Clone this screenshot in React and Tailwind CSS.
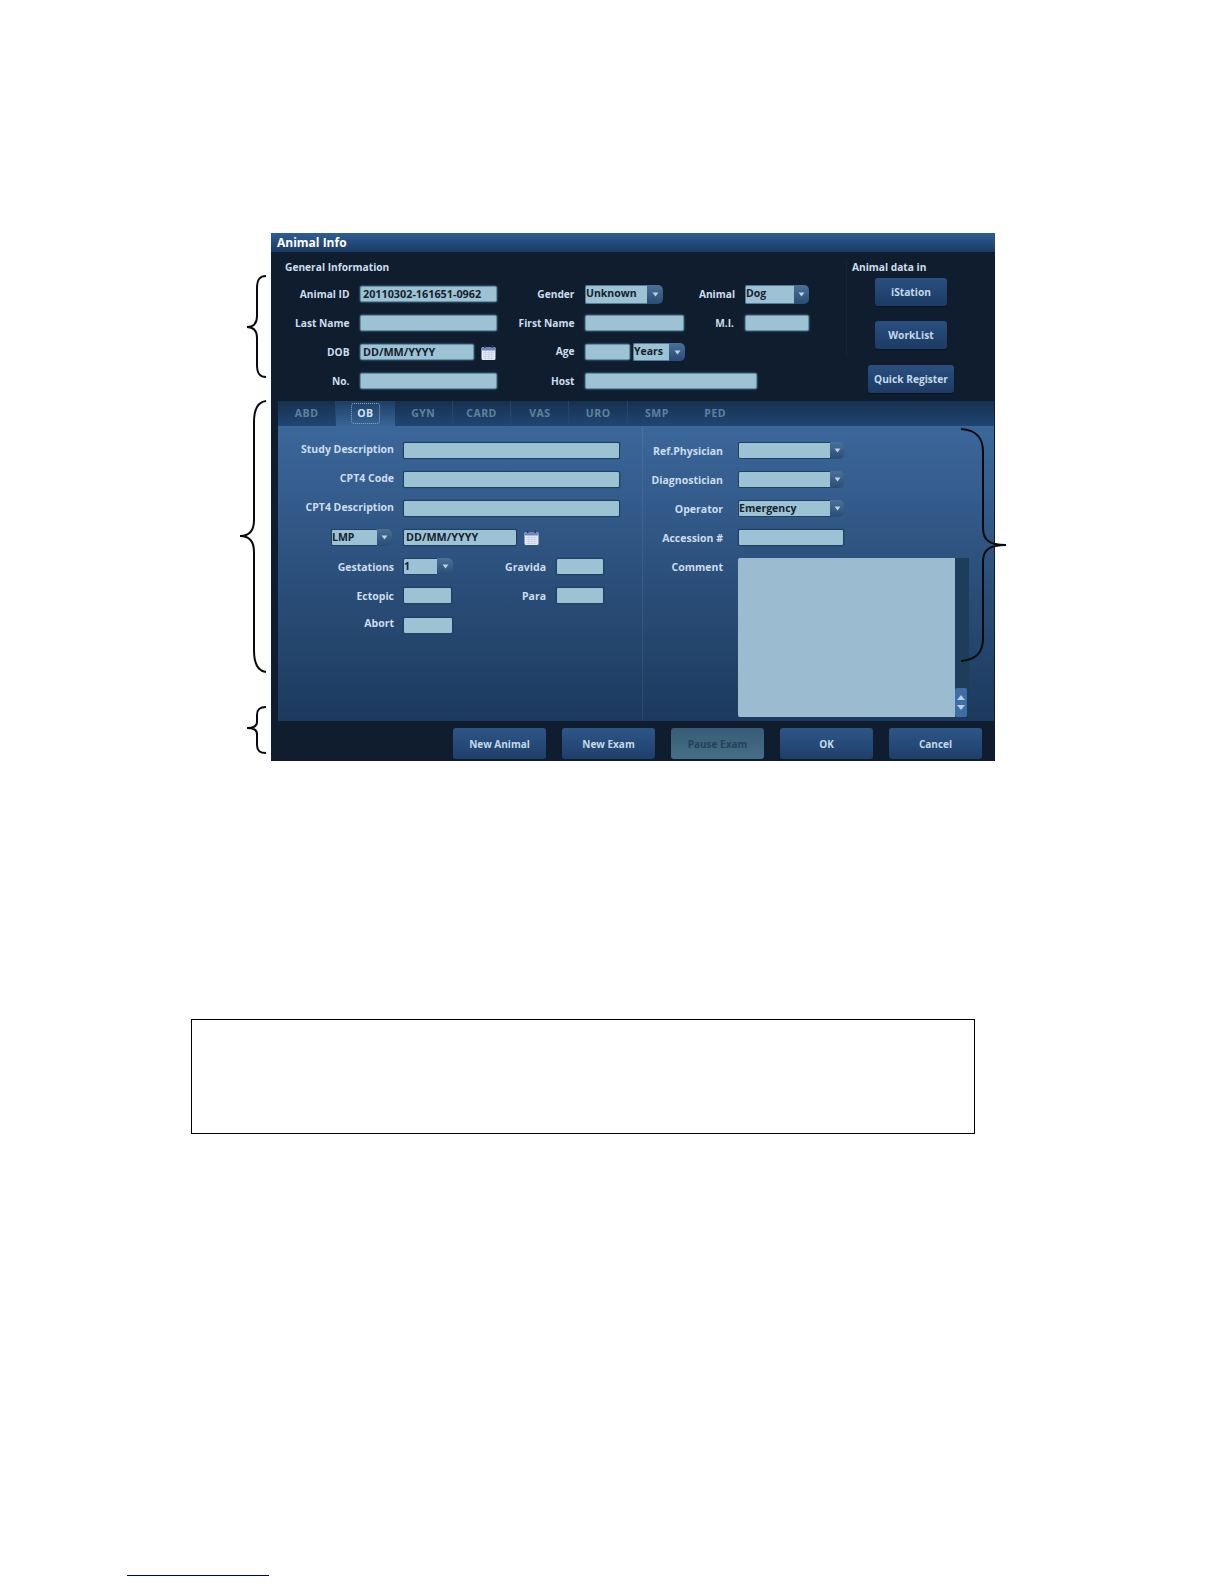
// Animal Info dialog on a manual page, with the page's annotation braces
const FONT = "font-['Open_Sans','Noto_Sans',sans-serif]";

function Label({ className = '', size = 'text-[10.5px]', children }) {
  return (
    <div className={`shrink-0 text-right leading-[14px] font-bold whitespace-nowrap text-[#cddded] ${size} ${className}`}>
      {children}
    </div>
  );
}

// labels of the dark General Information block run slightly smaller
function GenLabel({ className = '', children }) {
  return <Label size="text-[10.2px]" className={className}>{children}</Label>;
}

function Input({ className = '', dark, value }) {
  return (
    <div
      className={`shrink-0 flex items-center rounded-[2px] bg-[#9cc2d3] px-[2px] text-[10.8px] font-bold whitespace-nowrap text-[#16222f] border ${
        dark ? 'border-[#5f93ad] shadow-[0_0_2px_#6fa3bd]' : 'border-[#1d4163] shadow-[0_0_1px_#16304c]'
      } ${className}`}
    >
      {value}
    </div>
  );
}

function Select({ className = '', boxWidth, dark, value }) {
  return (
    <div className={`shrink-0 flex rounded-[3px] ${className}`}>
      <div
        className={`flex-1 flex items-center rounded-l-[2px] bg-[#9cc2d3] text-[10.5px] font-bold whitespace-nowrap text-[#16222f] border-y border-l ${
          dark ? 'border-[#4f7f9a]' : 'border-[#1d4163]'
        }`}
      >
        {value}
      </div>
      <div className={`${boxWidth} flex items-center justify-center rounded-r-[5px] bg-linear-to-b from-[#4b7199] to-[#2a4c75]`}>
        <svg width="7" height="5" viewBox="0 0 7 5">
          <path d="M0.5 0.5 H6.5 L3.5 4.5 Z" fill="#b9d3e4" />
        </svg>
      </div>
    </div>
  );
}

function CalendarIcon({ className = '' }) {
  return (
    <svg className={`shrink-0 ${className}`} width="15" height="15" viewBox="0 0 15 15">
      <rect x="0.5" y="2" width="14" height="13" rx="1.5" fill="#e6e9f6" />
      <rect x="0.5" y="2" width="14" height="3.5" rx="1.5" fill="#6f86bb" />
      <rect x="3" y="0.5" width="1.5" height="2.5" fill="#2c3d5c" />
      <rect x="10.5" y="0.5" width="1.5" height="2.5" fill="#2c3d5c" />
      <path d="M2 7.5 H13 M2 9.5 H13 M2 11.5 H13 M2 13.5 H13 M4.5 6 V14.5 M7.5 6 V14.5 M10.5 6 V14.5" stroke="#c2cbe2" strokeWidth="0.6" />
    </svg>
  );
}

function SideButton({ className = '', children }) {
  return (
    <div className={`pt-[2px] flex items-center justify-center rounded-[3px] bg-linear-to-b from-[#2a4f80] to-[#1c3b65] text-[10.2px] font-bold whitespace-nowrap text-[#c6d9e8] shadow-[0_1px_1px_#0a1420] ${className}`}>
      {children}
    </div>
  );
}

function FootButton({ children, disabled }) {
  return (
    <div
      className={`w-[93px] h-[31px] pt-[2px] flex items-center justify-center rounded-[3px] text-[10px] font-bold whitespace-nowrap ${
        disabled
          ? 'bg-linear-to-b from-[#375c78] to-[#466f85] text-[#254159]'
          : 'bg-linear-to-b from-[#2d5688] to-[#1f3f6c] text-[#c6d9e8]'
      }`}
    >
      {children}
    </div>
  );
}

const TABS = ['ABD', 'OB', 'GYN', 'CARD', 'VAS', 'URO', 'SMP', 'PED'];

function Tabs() {
  return (
    <div className="ml-[7px] mr-[1px] h-[25px] flex bg-linear-to-b from-[#17304f] to-[#214673]">
      {TABS.map((tab, i) => (
        <div
          key={tab}
          className={`w-[58.3px] h-[25px] flex items-center justify-center text-[10.5px] font-bold tracking-[0.5px] ${
            tab === 'OB'
              ? 'bg-linear-to-b from-[#1d3f66] to-[#3a6598] text-[#d3e2ee]'
              : 'text-[#5f82a3]'
          } ${i < 6 && tab !== 'OB' ? 'border-r border-[#24456c]' : ''}`}
        >
          {tab === 'OB' ? (
            <span className="w-[29px] h-[21px] flex items-center justify-center rounded-[3px] border border-dotted border-[#8fa9c0]">
              OB
            </span>
          ) : (
            tab
          )}
        </div>
      ))}
    </div>
  );
}

function GeneralInfo() {
  return (
    <div className="h-[149px] flex">
      <div className="w-[575px] shrink-0 pt-[8px]">
        <div className="ml-[14px] h-[14px] text-[10.2px] leading-[14px] font-bold text-[#cddded]">General Information</div>
        <div className="mt-[12px] flex flex-col gap-[13px]">
          <div className="h-[16px] flex items-center">
            <GenLabel className="w-[78.5px]">Animal ID</GenLabel>
            <Input dark className="ml-[10.5px] w-[137px] h-[16px]" value="20110302-161651-0962" />
            <GenLabel className="w-[77.5px]">Gender</GenLabel>
            <Select className="ml-[10.5px] w-[78px] h-[19px]" boxWidth="w-[16px]" dark value="Unknown" />
            <GenLabel className="w-[72px]">Animal</GenLabel>
            <Select className="ml-[10px] w-[64px] h-[19px]" boxWidth="w-[15px]" dark value="Dog" />
          </div>
          <div className="h-[16px] flex items-center">
            <GenLabel className="w-[78.5px]">Last Name</GenLabel>
            <Input dark className="ml-[10.5px] w-[137px] h-[16px]" />
            <GenLabel className="w-[77.5px]">First Name</GenLabel>
            <Input dark className="ml-[10.5px] w-[99px] h-[16px]" />
            <GenLabel className="w-[50px]">M.I.</GenLabel>
            <Input dark className="ml-[11px] w-[64px] h-[16px]" />
          </div>
          <div className="h-[16px] flex items-center">
            <GenLabel className="w-[78.5px]">DOB</GenLabel>
            <Input dark className="ml-[10.5px] w-[114px] h-[16px]" value="DD/MM/YYYY" />
            <CalendarIcon className="ml-[7px]" />
            <GenLabel className="ml-[1px] w-[77.5px] pb-[2px]">Age</GenLabel>
            <Input dark className="ml-[10.5px] w-[45px] h-[16px]" />
            <Select className="ml-[3px] w-[52px] h-[18px]" boxWidth="w-[16px]" dark value="Years" />
          </div>
          <div className="h-[16px] flex items-center">
            <GenLabel className="w-[78.5px]">No.</GenLabel>
            <Input dark className="ml-[10.5px] w-[137px] h-[16px]" />
            <GenLabel className="w-[77.5px]">Host</GenLabel>
            <Input dark className="ml-[10.5px] w-[172px] h-[16px]" />
          </div>
        </div>
      </div>
      <div className="w-px h-[95px] mt-[9px] bg-[#15263a]" />
      <div className="pt-[8px]">
        <div className="ml-[5px] h-[14px] text-[10.2px] leading-[14px] font-bold text-[#cddded]">Animal data in</div>
        <SideButton className="mt-[4px] ml-[28px] w-[72px] h-[28px]">iStation</SideButton>
        <SideButton className="mt-[15px] ml-[28px] w-[72px] h-[28px]">WorkList</SideButton>
        <SideButton className="mt-[16px] ml-[21px] w-[86px] h-[28px]">Quick Register</SideButton>
      </div>
    </div>
  );
}

function ExamLeft() {
  return (
    <div className="w-[365px] shrink-0 pt-[16px] flex flex-col gap-[12px] border-r border-[#ffffff12]">
      <div className="h-[17px] flex items-center">
        <Label className="w-[116px] pb-[4px]">Study Description</Label>
        <Input className="ml-[9px] w-[217px] h-[17px]" />
      </div>
      <div className="h-[17px] flex items-center">
        <Label className="w-[116px] pb-[4px]">CPT4 Code</Label>
        <Input className="ml-[9px] w-[217px] h-[17px]" />
      </div>
      <div className="h-[17px] flex items-center">
        <Label className="w-[116px] pb-[4px]">CPT4 Description</Label>
        <Input className="ml-[9px] w-[217px] h-[17px]" />
      </div>
      <div className="h-[17px] flex items-center">
        <Select className="ml-[53px] w-[61px] h-[17px]" boxWidth="w-[15px]" value="LMP" />
        <Input className="ml-[11px] w-[114px] h-[17px]" value="DD/MM/YYYY" />
        <CalendarIcon className="ml-[7px]" />
      </div>
      <div className="h-[17px] flex items-center">
        <Label className="w-[116px]">Gestations</Label>
        <Select className="ml-[9px] w-[50px] h-[17px]" boxWidth="w-[16px]" value="1" />
        <Label className="w-[93px]">Gravida</Label>
        <Input className="ml-[10px] w-[48px] h-[17px]" />
      </div>
      <div className="h-[17px] flex items-center">
        <Label className="w-[116px]">Ectopic</Label>
        <Input className="ml-[9px] w-[49px] h-[17px]" />
        <Label className="w-[94px]">Para</Label>
        <Input className="ml-[10px] w-[48px] h-[17px]" />
      </div>
      <div className="mt-[1px] h-[17px] flex items-center">
        <Label className="w-[116px] pb-[6px]">Abort</Label>
        <Input className="ml-[9px] w-[50px] h-[17px]" />
      </div>
    </div>
  );
}

function ExamRight() {
  return (
    <div className="pt-[16px] flex flex-col gap-[12px]">
      <div className="h-[17px] flex items-center">
        <Label className="w-[80px]">Ref.Physician</Label>
        <Select className="ml-[15px] w-[106px] h-[17px]" boxWidth="w-[14px]" value="" />
      </div>
      <div className="h-[17px] flex items-center">
        <Label className="w-[80px]">Diagnostician</Label>
        <Select className="ml-[15px] w-[106px] h-[17px]" boxWidth="w-[14px]" value="" />
      </div>
      <div className="h-[17px] flex items-center">
        <Label className="w-[80px]">Operator</Label>
        <Select className="ml-[15px] w-[106px] h-[17px]" boxWidth="w-[14px]" value="Emergency" />
      </div>
      <div className="h-[17px] flex items-center">
        <Label className="w-[80px]">Accession #</Label>
        <Input className="ml-[15px] w-[106px] h-[17px]" />
      </div>
      <div className="flex items-start">
        <Label className="w-[80px] pt-[2px]">Comment</Label>
        <div className="ml-[15px] w-[217px] h-[159px] bg-[#9bbcd0] rounded-l-[2px]" />
        <div className="w-[14px] h-[159px] flex flex-col justify-end bg-[#1e3d5a]">
          <div className="w-[12px] h-[29px] flex flex-col items-center justify-center gap-[5px] rounded-[2px] bg-[#3f6ea6]">
            <svg width="8" height="5" viewBox="0 0 8 5"><path d="M0 5 L4 0 L8 5 Z" fill="#b6cfe2" /></svg>
            <svg width="8" height="5" viewBox="0 0 8 5"><path d="M0 0 H8 L4 5 Z" fill="#b6cfe2" /></svg>
          </div>
        </div>
      </div>
    </div>
  );
}

function AnimalInfo() {
  return (
    <div className="ml-[271px] w-[724px] h-[528px] bg-[#101d2e]">
      <div className="h-[19px] pl-[6px] flex items-center bg-linear-to-b from-[#2f5e94] to-[#1b3a63] text-[12px] font-bold text-white">
        Animal Info
      </div>
      <GeneralInfo />
      <Tabs />
      <div className="ml-[7px] mr-[1px] h-[295px] flex bg-linear-to-b from-[#3c679b] to-[#1c3a5e]">
        <ExamLeft />
        <ExamRight />
      </div>
      <div className="h-[40px] pt-[7px] pr-[13px] flex justify-end gap-[16px]">
        <FootButton>New Animal</FootButton>
        <FootButton>New Exam</FootButton>
        <FootButton disabled>Pause Exam</FootButton>
        <FootButton>OK</FootButton>
        <FootButton>Cancel</FootButton>
      </div>
    </div>
  );
}

export default function App() {
  return (
    <div className={`relative w-[1224px] h-[1584px] pt-[233px] bg-white overflow-hidden ${FONT}`}>
      <AnimalInfo />
      <div className="mt-[258px] ml-[191px] w-[784px] h-[115px] border border-black" />
      <div className="mt-[441px] ml-[127px] w-[142px] h-px bg-[#000080]" />

      {/* annotation braces drawn over the page */}
      <svg className="absolute left-0 top-0 pointer-events-none" width="1224" height="1584" fill="none" stroke="#0a0a0a" strokeWidth="2">
        <path d="M266 276 C260 276 257 279 257 288 L257 316 C257 323 254 327 247 327 C254 327 257 331 257 338 L257 365 C257 374 260 377 266 377" />
        <path d="M266 401 C258 402 254 409 254 422 L254 520 C254 530 250 536 240 536 C250 536 254 542 254 552 L254 650 C254 664 258 671 266 672" />
        <path d="M266 707 C260 707 257 709 257 715 L257 722 C257 726 254 728 247 728 C254 728 257 730 257 734 L257 745 C257 751 260 753 266 753" />
        <path d="M961 429 C976 430 983 437 983 452 L983 528 C983 540 989 545 1006 545 C989 545 983 550 983 562 L983 638 C983 653 976 660 961 661" />
      </svg>
    </div>
  );
}
